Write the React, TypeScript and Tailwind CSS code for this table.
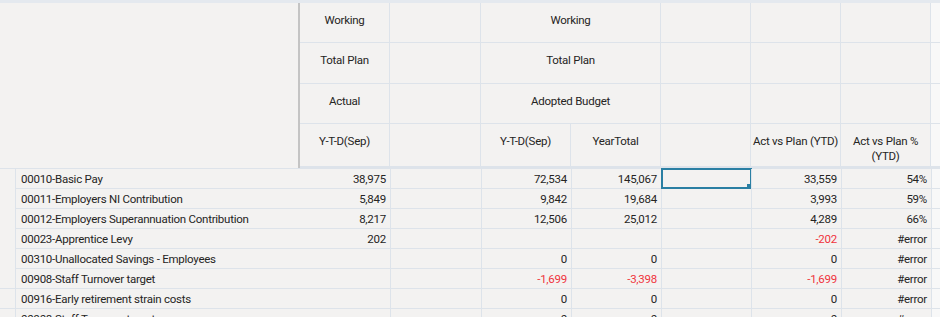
import React from "react";

type Cell = { v: string; red?: boolean };

const rows: { label: string; cells: (Cell | null)[]; groupEnd?: boolean }[] = [
  { label: "00010-Basic Pay", cells: [{ v: "38,975" }, null, { v: "72,534" }, { v: "145,067" }, null, { v: "33,559" }, { v: "54%" }] },
  { label: "00011-Employers NI Contribution", cells: [{ v: "5,849" }, null, { v: "9,842" }, { v: "19,684" }, null, { v: "3,993" }, { v: "59%" }] },
  { label: "00012-Employers Superannuation Contribution", cells: [{ v: "8,217" }, null, { v: "12,506" }, { v: "25,012" }, null, { v: "4,289" }, { v: "66%" }] },
  { label: "00023-Apprentice Levy", cells: [{ v: "202" }, null, null, null, null, { v: "-202", red: true }, { v: "#error" }] },
  { label: "00310-Unallocated Savings - Employees", cells: [null, null, { v: "0" }, { v: "0" }, null, { v: "0" }, { v: "#error" }] },
  { label: "00908-Staff Turnover target", cells: [null, null, { v: "-1,699", red: true }, { v: "-3,398", red: true }, null, { v: "-1,699", red: true }, { v: "#error" }], groupEnd: true },
  { label: "00916-Early retirement strain costs", cells: [null, null, { v: "0" }, { v: "0" }, null, { v: "0" }, { v: "#error" }], groupEnd: true },
  { label: "00908-Staff Turnover target", cells: [null, null, { v: "0" }, { v: "0" }, null, { v: "0" }, { v: "#error" }] },
];

const cols = "grid-cols-[16px_284px_90px_91px_90px_90px_90px_90px_90px_9px]";
const line = "border-[#dde3ea]";

function HeadCell({ children, className = "" }: { children?: React.ReactNode; className?: string }) {
  return (
    <div className={`border-r border-b ${line} pt-[10px] text-center leading-[15px] ${className}`}>
      {children}
    </div>
  );
}

export default function App() {
  return (
    <div
      className="w-[940px] h-[317px] overflow-hidden bg-[#f3f2f1] text-[11.5px] tracking-[-0.25px] text-[#252423]"
      style={{ fontFamily: '"Segoe UI", Roboto, sans-serif' }}
    >
      <div className="h-[3px] bg-[#e4e9ef]" />
      {/* header */}
      <div className={`grid ${cols} grid-rows-[40px_41px_40px_44px]`}>
        <div className="col-span-2 row-span-4 border-r-2 border-[#c4c4c4]" />
        <HeadCell>Working</HeadCell>
        <HeadCell />
        <HeadCell className="col-span-2">Working</HeadCell>
        <HeadCell />
        <HeadCell />
        <HeadCell />
        <div className={`border-b ${line} bg-[#f8f8f8]`} />

        <HeadCell>Total Plan</HeadCell>
        <HeadCell />
        <HeadCell className="col-span-2">Total Plan</HeadCell>
        <HeadCell />
        <HeadCell />
        <HeadCell />
        <div className={`border-b ${line} bg-[#f8f8f8]`} />

        <HeadCell>Actual</HeadCell>
        <HeadCell />
        <HeadCell className="col-span-2">Adopted Budget</HeadCell>
        <HeadCell />
        <HeadCell />
        <HeadCell />
        <div className={`border-b ${line} bg-[#f8f8f8]`} />

        <HeadCell className="border-b-2">Y-T-D(Sep)</HeadCell>
        <HeadCell className="border-b-2" />
        <HeadCell className="border-b-2">Y-T-D(Sep)</HeadCell>
        <HeadCell className="border-b-2">YearTotal</HeadCell>
        <HeadCell className="border-b-2" />
        <HeadCell className="border-b-2 whitespace-nowrap">Act vs Plan (YTD)</HeadCell>
        <HeadCell className="border-b-2">
          Act vs Plan %
          <br />
          (YTD)
        </HeadCell>
        <div className={`border-b-2 ${line} bg-[#f8f8f8]`} />
      </div>
      <div className={`h-px ${line} border-b`} />

      {/* body */}
      {rows.map((r, i) => (
        <div key={i} className={`grid ${cols} h-[20px]`}>
          <div className={`border-r ${line} ${r.groupEnd ? "border-b" : ""}`} />
          <div className={`border-b ${line} pl-[5px] pt-px leading-[18px] whitespace-nowrap`}>{r.label}</div>
          {r.cells.map((c, j) => {
            const selected = i === 0 && j === 4;
            return (
              <div
                key={j}
                className={`relative border-b ${line} ${j === 0 ? "" : "border-l"} pr-[4px] pt-px text-right leading-[18px] ${c?.red ? "text-[#f0323c]" : ""}`}
              >
                {c?.v}
                {selected && (
                  <div className="absolute -left-px -top-px w-[91px] h-[21px] border-2 border-[#2a7fa3]">
                    <div className="absolute -right-[2px] -bottom-[2px] w-[5px] h-[5px] bg-[#2a7fa3]" />
                  </div>
                )}
              </div>
            );
          })}
          <div className={`border-l border-b ${line} bg-[#f8f8f8]`} />
        </div>
      ))}
    </div>
  );
}
